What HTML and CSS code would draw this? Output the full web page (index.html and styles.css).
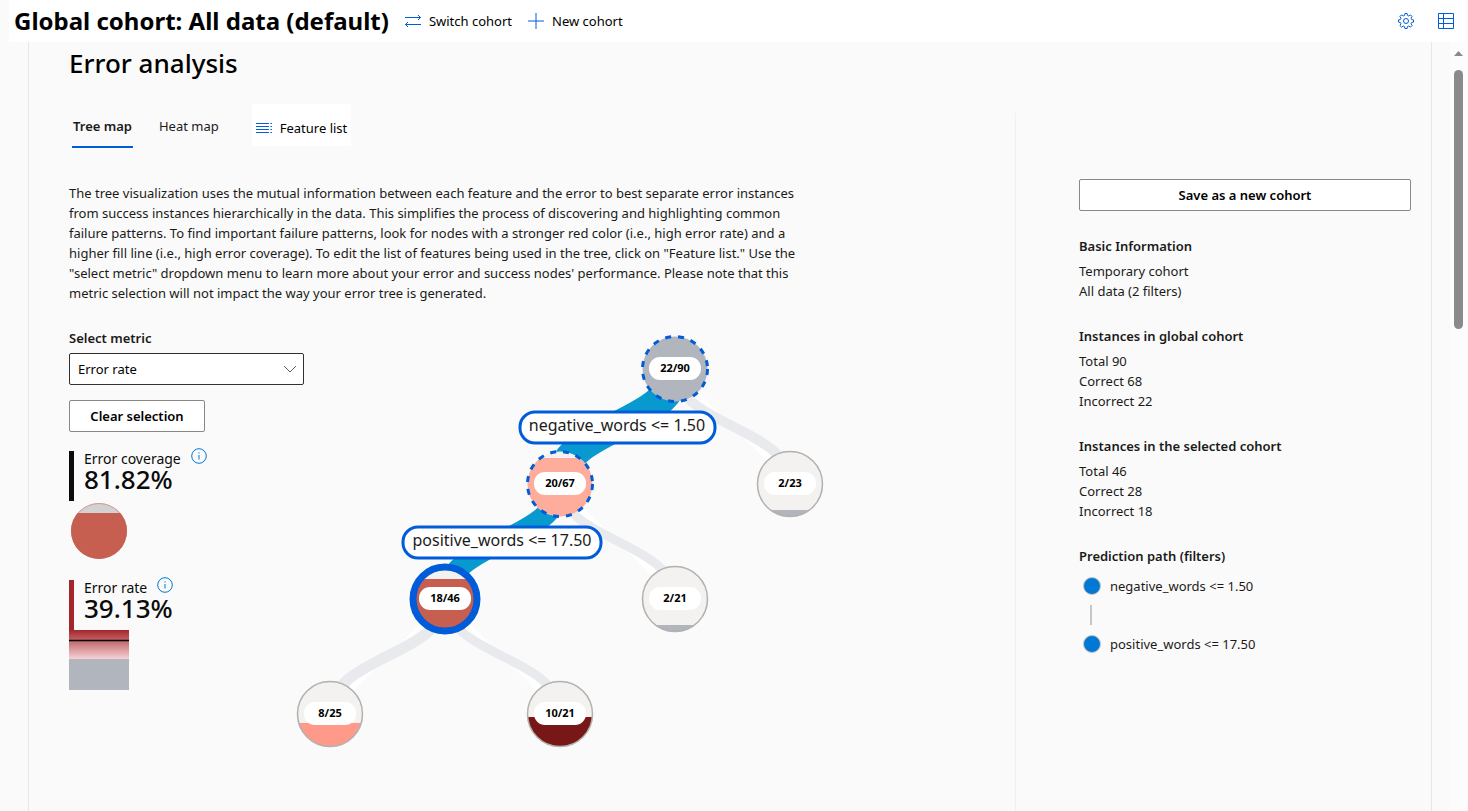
FILE: index.html
```html
<!DOCTYPE html>
<html lang="en">
<head>
<meta charset="utf-8">
<title>Error analysis</title>
<link rel="stylesheet" href="styles.css">
</head>
<body>
<header class="topbar">
  <h1 class="topbar-title">Global cohort: All data (default)</h1>
  <button class="command" type="button">
    <svg class="icon" viewBox="0 0 16 16" aria-hidden="true"><path d="M0 4.5H15.5M13 2l2.5 2.5L13 7M16 11.5H.5M3 9L.5 11.5 3 14"/></svg>
    Switch cohort
  </button>
  <button class="command" type="button">
    <svg class="icon" viewBox="0 0 16 16" aria-hidden="true"><path d="M8 0V16M0 8H16"/></svg>
    New cohort
  </button>
  <div class="topbar-tools">
    <button class="tool" type="button" aria-label="Settings">
      <svg class="icon" viewBox="0 0 16 16" aria-hidden="true"><path d="M6.9.5h2.2l.4 1.9 1.3.6 1.7-1.1 1.6 1.6L13 5.200l.6 1.300 1.900.4v2.200l-1.900.4-.6 1.300 1.100 1.700-1.600 1.600-1.700-1.100-1.300.6-.4 1.900H6.900l-.4-1.900-1.300-.6-1.700 1.100-1.600-1.600L3 10.800l-.6-1.300L.5 9.100V6.900l1.900-.4L3 5.200 1.900 3.500l1.600-1.600L5.200 3l1.300-.6z"/><circle cx="8" cy="8" r="2.500"/></svg>
    </button>
    <button class="tool" type="button" aria-label="Cohort list">
      <svg class="icon" viewBox="0 0 16 16" aria-hidden="true"><path d="M.5.5h15v15H.5zM.5 5.500h15M.5 10.500h15M5.500.5v15"/></svg>
    </button>
  </div>
</header>

<div class="viewport">
  <main class="card">
    <h2 class="card-title">Error analysis</h2>
    <div class="columns">
      <section class="explorer">
        <div class="tabs">
          <button class="tab tab-active" type="button">Tree map</button>
          <button class="tab" type="button">Heat map</button>
          <button class="feature-button" type="button">
            <svg class="icon" viewBox="0 0 16 16" aria-hidden="true"><path d="M0 3.500H13M0 6.500H13M0 9.500H13M0 12.500H13M14.500 3.500h1.500M14.500 6.500h1.500M14.500 9.500h1.500M14.500 12.500h1.500"/></svg>
            Feature list
          </button>
        </div>
        <p class="description">The tree visualization uses the mutual information between each feature and the error to best separate error instances from success instances hierarchically in the data. This simplifies the process of discovering and highlighting common failure patterns. To find important failure patterns, look for nodes with a stronger red color (i.e., high error rate) and a higher fill line (i.e., high error coverage). To edit the list of features being used in the tree, click on "Feature list." Use the "select metric" dropdown menu to learn more about your error and success nodes' performance. Please note that this metric selection will not impact the way your error tree is generated.</p>
        <div class="workspace">
          <div class="controls">
            <label class="field-label" for="metric">Select metric</label>
            <div class="select-wrap">
              <select class="select" id="metric"><option>Error rate</option></select>
              <svg class="chevron" viewBox="0 0 12 12" aria-hidden="true"><path d="M0 3l6 6 6-6"/></svg>
            </div>
            <button class="button clear-button" type="button">Clear selection</button>
            <div class="stat stat-coverage">
              <div class="stat-name">Error coverage
                <svg class="info" viewBox="0 0 16 16" aria-hidden="true"><circle cx="8" cy="8" r="7.300"/><path d="M8 7v4.500M8 4.300v1.200"/></svg>
              </div>
              <div class="stat-value">81.82%</div>
            </div>
            <svg class="coverage-gauge" viewBox="0 0 60 56" aria-hidden="true">
              <clipPath id="gauge-clip"><circle cx="30" cy="28" r="28"/></clipPath>
              <g clip-path="url(#gauge-clip)"><rect width="60" height="56" fill="#d2d2d2"/><rect y="10" width="60" height="46" fill="#c75f50"/></g>
              <circle cx="30" cy="28" r="27.500" fill="none" stroke="#c75f50" stroke-opacity=".5"/>
            </svg>
            <div class="stat stat-rate">
              <div class="stat-name">Error rate
                <svg class="info" viewBox="0 0 16 16" aria-hidden="true"><circle cx="8" cy="8" r="7.300"/><path d="M8 7v4.500M8 4.300v1.200"/></svg>
              </div>
              <div class="stat-value">39.13%</div>
            </div>
            <svg class="rate-gauge" viewBox="0 0 60 60" aria-hidden="true">
              <linearGradient id="rate-fill" x1="0" y1="0" x2="0" y2="1"><stop offset="0" stop-color="#a4262c"/><stop offset="1" stop-color="#f6d3d6"/></linearGradient>
              <rect width="60" height="29" fill="url(#rate-fill)"/>
              <rect y="29" width="60" height="31" fill="#b1b5be"/>
              <path d="M0 10.500H60" stroke="#000" stroke-width="1.500"/>
            </svg>
          </div>
          <svg class="tree" viewBox="0 0 520 430" role="img" aria-label="Error tree">
            <clipPath id="disc"><circle r="32.500"/></clipPath>
            <g class="link">
              <path stroke-width="10" d="M371 41C371 98 486 98 486 156"/>
              <path stroke-width="9" d="M256 156C256 213 371 213 371 271"/>
              <path stroke-width="11" d="M141 271C141 328 26 328 26 386"/>
              <path stroke-width="9" d="M141 271C141 328 256 328 256 386"/>
            </g>
            <g class="link link-selected">
              <path stroke-width="30" d="M371 41C371 98 256 98 256 156"/>
              <path stroke-width="21" d="M256 156C256 213 141 213 141 271"/>
            </g>
            <g transform="translate(371 41)">
              <circle r="32.500" fill="#b1b5be"/><circle class="ring-path" r="32.500"/>
              <rect class="count-box" x="-26" y="-12" width="52" height="23" rx="11"/><text class="count" y="3">22/90</text>
            </g>
            <g transform="translate(256 156)">
              <circle r="32.500" fill="#f3f2f1"/><rect clip-path="url(#disc)" x="-33" y="-26" width="66" height="60" fill="#feac9b"/><circle class="ring-path" r="32.500"/>
              <rect class="count-box" x="-26" y="-12" width="52" height="23" rx="11"/><text class="count" y="3">20/67</text>
            </g>
            <g transform="translate(486 156)">
              <circle r="32.500" fill="#f3f2f1"/><rect clip-path="url(#disc)" x="-33" y="26" width="66" height="8" fill="#b1b5be"/><circle class="ring" r="32.500"/>
              <rect class="count-box" x="-26" y="-12" width="52" height="23" rx="11"/><text class="count" y="3">2/23</text>
            </g>
            <g transform="translate(141 271)">
              <circle r="32.500" fill="#f3f2f1"/><rect clip-path="url(#disc)" x="-33" y="-20" width="66" height="54" fill="#c75f50"/><circle class="ring-selected" r="32"/>
              <rect class="count-box" x="-26" y="-12" width="52" height="23" rx="11"/><text class="count" y="3">18/46</text>
            </g>
            <g transform="translate(371 271)">
              <circle r="32.500" fill="#f3f2f1"/><rect clip-path="url(#disc)" x="-33" y="26" width="66" height="8" fill="#b1b5be"/><circle class="ring" r="32.500"/>
              <rect class="count-box" x="-26" y="-12" width="52" height="23" rx="11"/><text class="count" y="3">2/21</text>
            </g>
            <g transform="translate(26 386)">
              <circle r="32.500" fill="#f3f2f1"/><rect clip-path="url(#disc)" x="-33" y="9" width="66" height="25" fill="#ff9a8b"/><circle class="ring" r="32.500"/>
              <rect class="count-box" x="-26" y="-12" width="52" height="23" rx="11"/><text class="count" y="3">8/25</text>
            </g>
            <g transform="translate(256 386)">
              <circle r="32.500" fill="#f3f2f1"/><rect clip-path="url(#disc)" x="-33" y="3" width="66" height="31" fill="#781717"/><circle class="ring" r="32.500"/>
              <rect class="count-box" x="-26" y="-12" width="52" height="23" rx="11"/><text class="count" y="3">10/21</text>
            </g>
            <rect class="filter-box" x="216" y="84" width="195" height="31" rx="15"/><text class="filter" x="313" y="103">negative_words &lt;= 1.50</text>
            <rect class="filter-box" x="99" y="199" width="198" height="31" rx="15"/><text class="filter" x="198" y="218">positive_words &lt;= 17.50</text>
          </svg>
        </div>
      </section>

      <aside class="details">
        <button class="button save-button" type="button">Save as a new cohort</button>
        <section class="facts"><h3 class="facts-title">Basic Information</h3><p>Temporary cohort</p><p>All data (2 filters)</p></section>
        <section class="facts"><h3 class="facts-title">Instances in global cohort</h3><p>Total 90</p><p>Correct 68</p><p>Incorrect 22</p></section>
        <section class="facts"><h3 class="facts-title">Instances in the selected cohort</h3><p>Total 46</p><p>Correct 28</p><p>Incorrect 18</p></section>
        <section class="facts">
          <h3 class="facts-title">Prediction path (filters)</h3>
          <ul class="path">
            <li class="path-step">negative_words &lt;= 1.50</li>
            <li class="path-step">positive_words &lt;= 17.50</li>
          </ul>
        </section>
      </aside>
    </div>
  </main>
  <div class="scrollbar" aria-hidden="true">
    <svg class="scroll-arrow" viewBox="0 0 9 5"><path d="M0 5L4.500 0 9 5z"/></svg>
    <div class="scroll-thumb"></div>
  </div>
</div>
</body>
</html>
```
FILE: styles.css
```css
* { box-sizing: border-box; }
body {
  margin: 0;
  height: 100vh;
  display: flex;
  flex-direction: column;
  overflow: hidden;
  background: #fafafa;
  color: #1b1a19;
  font: 13px/20px "Noto Sans", "Open Sans", sans-serif;
}
h1, h2, h3, p, ul { margin: 0; padding: 0; }
button, select { font: inherit; color: #000; }
button { padding: 0; border: 0; background: none; }
.icon { width: 16px; height: 16px; flex: none; fill: none; stroke: #015cda; stroke-width: 1; }

.topbar {
  flex: none;
  display: flex;
  align-items: center;
  height: 42px;
  margin: 0 2px 0 9px;
  padding: 0 12px 0 5px;
  background: #fff;
}
.topbar-title { margin-right: 16px; color: #000; font-size: 24px; line-height: 32px; font-weight: 700; white-space: nowrap; }
.command { display: flex; align-items: center; gap: 8px; margin-right: 16px; }
.topbar-tools { display: flex; gap: 24px; margin-left: auto; }
.tool { display: flex; }

.viewport { flex: 1; min-height: 0; display: flex; }
.card {
  flex: 1;
  min-width: 0;
  display: flex;
  flex-direction: column;
  margin: 0 18px 0 28px;
  padding: 3px 20px 0 40px;
  border: 1px solid #e6e6e6;
  border-width: 0 1px;
}
.card-title { color: #000; font-size: 26px; line-height: 36px; font-weight: 500; }
.columns { flex: 1; display: flex; margin-top: 23px; }
.explorer { flex: 1; min-width: 0; }
.tabs { display: flex; align-items: flex-start; }
.tab { height: 44px; margin: 0 22px 0 3px; padding: 2px 1px 0; border-bottom: 2px solid transparent; color: #1b1a19; }
.tab-active { font-weight: 600; border-bottom-color: #015cda; }
.feature-button { display: flex; align-items: center; gap: 8px; height: 42px; margin-left: 10px; padding: 6px 4px 0; background: #fff; }
.description { max-width: 740px; margin-top: 35px; }

.workspace { display: flex; margin-top: 25px; }
.controls { flex: none; width: 235px; display: flex; flex-direction: column; align-items: flex-start; }
.field-label { font-weight: 600; }
.select-wrap { display: grid; align-items: center; width: 100%; margin-top: 5px; }
.select {
  grid-area: 1 / 1;
  width: 100%;
  height: 32px;
  padding: 0 8px;
  appearance: none;
  border: 1px solid #323130;
  border-radius: 2px;
  background: #fff;
}
.chevron { grid-area: 1 / 1; justify-self: end; width: 12px; height: 12px; margin-right: 8px; fill: none; stroke: #605e5c; pointer-events: none; }
.button { height: 32px; border: 1px solid #8a8886; border-radius: 2px; background: #fff; font-weight: 600; }
.clear-button { width: 136px; margin-top: 15px; }
.stat { height: 50px; padding-left: 10px; border-left: 5px solid #0b0b0b; color: #0b0b0b; }
.stat-coverage { margin-top: 19px; }
.stat-rate { margin-top: 21px; border-left-color: #a4262c; }
.stat-name { display: flex; gap: 10px; font-size: 14px; line-height: 16px; }
.stat-value { font-size: 26px; line-height: 24px; font-weight: 500; }
.info { width: 16px; height: 16px; margin-top: -3px; fill: none; stroke: #0078d4; stroke-width: 1; }
.coverage-gauge { width: 60px; height: 56px; margin-top: 2px; }
.rate-gauge { width: 60px; height: 60px; }

.tree { flex: none; width: 520px; height: 430px; overflow: visible; }
.link { fill: #fff; stroke: #e8eaed; }
.link-selected { fill: none; stroke: #089ace; }
.ring, .ring-path, .ring-selected { fill: none; stroke: #b3b0ad; stroke-width: 1.5; }
.ring-path { stroke: #015cda; stroke-width: 3; stroke-dasharray: 6 7; }
.ring-selected { stroke: #015cda; stroke-width: 7; }
.count-box { fill: #fff; }
.count { fill: #000; font-size: 11px; font-weight: 700; text-anchor: middle; }
.filter-box { fill: #fff; stroke: #015cda; stroke-width: 3; }
.filter { fill: #1b1a19; font-size: 16px; text-anchor: middle; }

.details { flex: none; width: 396px; margin-top: 9px; padding: 66px 0 0 63px; border-left: 1px solid #f0f0f0; }
.save-button { width: 100%; }
.facts { margin-top: 25px; }
.facts-title { margin-bottom: 5px; font-size: 13px; line-height: 20px; font-weight: 600; }
.path { list-style: none; margin-top: 10px; }
.path-step { display: flex; flex-wrap: wrap; align-items: center; gap: 9px; padding-left: 4px; }
.path-step::before { content: ""; width: 16px; height: 16px; border: 1px solid #c8c6c4; border-radius: 50%; background: #0078d4; }
.path-step:first-child::after { content: ""; width: 2px; height: 20px; margin: 0 200px 9px 7px; background: #c8c6c4; }

.scrollbar { flex: none; display: flex; flex-direction: column; align-items: center; width: 17px; margin-right: 1px; padding-top: 9px; background: #fcfcfc; }
.scroll-arrow { width: 9px; height: 5px; fill: #8a8a8a; }
.scroll-thumb { width: 9px; height: 259px; margin-top: 14px; border-radius: 5px; background: #8a8a8a; }
```
